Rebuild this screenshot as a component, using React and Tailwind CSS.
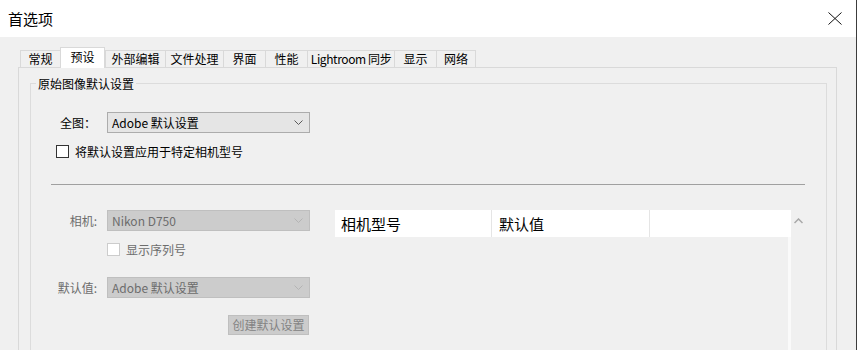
const tabs = [
  { label: '常规', w: 'w-[40px]' },
  { label: '预设', w: 'w-[45px]', active: true },
  { label: '外部编辑', w: 'w-[60px]' },
  { label: '文件处理', w: 'w-[58px]' },
  { label: '界面', w: 'w-[42px]' },
  { label: '性能', w: 'w-[42px]' },
  { label: 'Lightroom 同步', w: 'w-[87px]', tight: true },
  { label: '显示', w: 'w-[42px]' },
  { label: '网络', w: 'w-[40px]', last: true },
];

function Chevron({ color }) {
  return (
    <svg width="9" height="5" viewBox="0 0 9 5" fill="none">
      <path d="M0.5 0.5 L4.5 4.5 L8.5 0.5" stroke={color} strokeWidth="1" />
    </svg>
  );
}

function Dropdown({ text, disabled }) {
  return (
    <div
      className={`w-[203px] h-[21px] flex items-center justify-between pl-[4px] pr-[6px] border text-[12px] leading-[16px] ${
        disabled ? 'bg-[#cccccc] border-[#bfbfbf] text-[#6d6d6d]' : 'bg-[#e5e5e5] border-[#acacac] text-black'
      }`}
    >
      <span>{text}</span>
      <Chevron color={disabled ? '#b4b4b4' : '#5a5a5a'} />
    </div>
  );
}

export default function App() {
  return (
    <div className="w-[857px] h-[350px] overflow-hidden bg-[#f0f0f0] border-r border-[#3c3c3c] flex flex-col font-['Noto_Sans_CJK_SC','Liberation_Sans',sans-serif] text-black">
      {/* title bar */}
      <div className="h-[37px] shrink-0 bg-white flex items-center justify-between pl-[8px] pr-[14px]">
        <span className="text-[15px] leading-[20px]">首选项</span>
        <svg width="14" height="13" viewBox="0 0 14 13" fill="none">
          <path d="M0.5 0.5 L13.5 12.5 M13.5 0.5 L0.5 12.5" stroke="#111" strokeWidth="1" />
        </svg>
      </div>

      {/* tabs */}
      <div className="flex items-end h-[21px] mt-[10px] ml-[20px] shrink-0">
        {tabs.map((t) =>
          t.active ? (
            <div
              key={t.label}
              className={`${t.w} h-[21px] relative z-10 bg-white border border-b-0 border-[#d9d9d9] flex items-center justify-center text-[12px] leading-[16px] pb-[2px]`}
            >
              {t.label}
            </div>
          ) : (
            <div
              key={t.label}
              className={`${t.w} h-[17px] mb-px border-t border-l ${t.last ? 'border-r' : ''} ${
                t.tight ? 'tracking-[-0.4px]' : ''
              } border-[#d9d9d9] flex items-center justify-center text-[12px] leading-[16px] whitespace-nowrap`}
            >
              {t.label}
            </div>
          )
        )}
      </div>

      {/* tab panel */}
      <div className="-mt-px ml-[18px] w-[819px] flex-1 border border-b-0 border-[#d9d9d9] pl-[11px] pt-[15px] pr-[9px] flex flex-col">
        <div className="relative flex-1 border border-b-0 border-[#dcdcdc]">
          <span className="absolute top-[-8px] left-[5px] bg-[#f0f0f0] px-[2px] text-[12px] leading-[16px]">
            原始图像默认设置
          </span>

          <div className="flex items-center mt-[28px] pl-[29px] text-[12px] leading-[16px]">
            <span className="w-[47px]">全图：</span>
            <Dropdown text="Adobe 默认设置" />
          </div>

          <div className="flex items-center mt-[12px] pl-[25px] gap-[6px] text-[12px] leading-[13px]">
            <div className="w-[13px] h-[13px] bg-white border border-[#333333]" />
            <span>将默认设置应用于特定相机型号</span>
          </div>

          <div className="mt-[26px] ml-[20px] w-[754px] h-px bg-[#a0a0a0]" />

          <div className="flex mt-[25px]">
            {/* left column */}
            <div className="w-[279px] flex flex-col text-[12px] leading-[16px] text-[#6d6d6d]">
              <div className="flex items-center">
                <span className="w-[76px] text-right pr-[10px]">相机:</span>
                <Dropdown text="Nikon D750" disabled />
              </div>
              <div className="flex items-center mt-[12px] pl-[76px] gap-[6px] leading-[13px]">
                <div className="w-[13px] h-[13px] bg-white border border-[#cccccc]" />
                <span>显示序列号</span>
              </div>
              <div className="flex items-center mt-[21px]">
                <span className="w-[76px] text-right pr-[10px]">默认值:</span>
                <Dropdown text="Adobe 默认设置" disabled />
              </div>
              <div className="mt-[17px] ml-[197px] w-[81px] h-[20px] bg-[#cccccc] border border-[#bfbfbf] flex items-center justify-center text-[#838383]">
                创建默认设置
              </div>
            </div>

            {/* camera table */}
            <div className="ml-[25px] w-[456px] flex flex-col h-[160px]">
              <div className="h-[27px] bg-white flex text-[15px] leading-[20px]">
                <div className="w-[157px] border-r border-[#e5e5e5] flex items-center pl-[6px]">相机型号</div>
                <div className="w-[158px] border-r border-[#e5e5e5] flex items-center pl-[7px]">默认值</div>
                <div className="flex-1" />
              </div>
              <div className="flex-1 border-r-[3px] border-[#fafafa]" />
            </div>
            <div className="w-[14px] flex justify-center pt-[8px]">
              <svg width="9" height="6" viewBox="0 0 9 6" fill="none">
                <path d="M0.5 5 L4.5 1 L8.5 5" stroke="#a8a8a8" strokeWidth="1.5" />
              </svg>
            </div>
          </div>
        </div>
      </div>
    </div>
  );
}
